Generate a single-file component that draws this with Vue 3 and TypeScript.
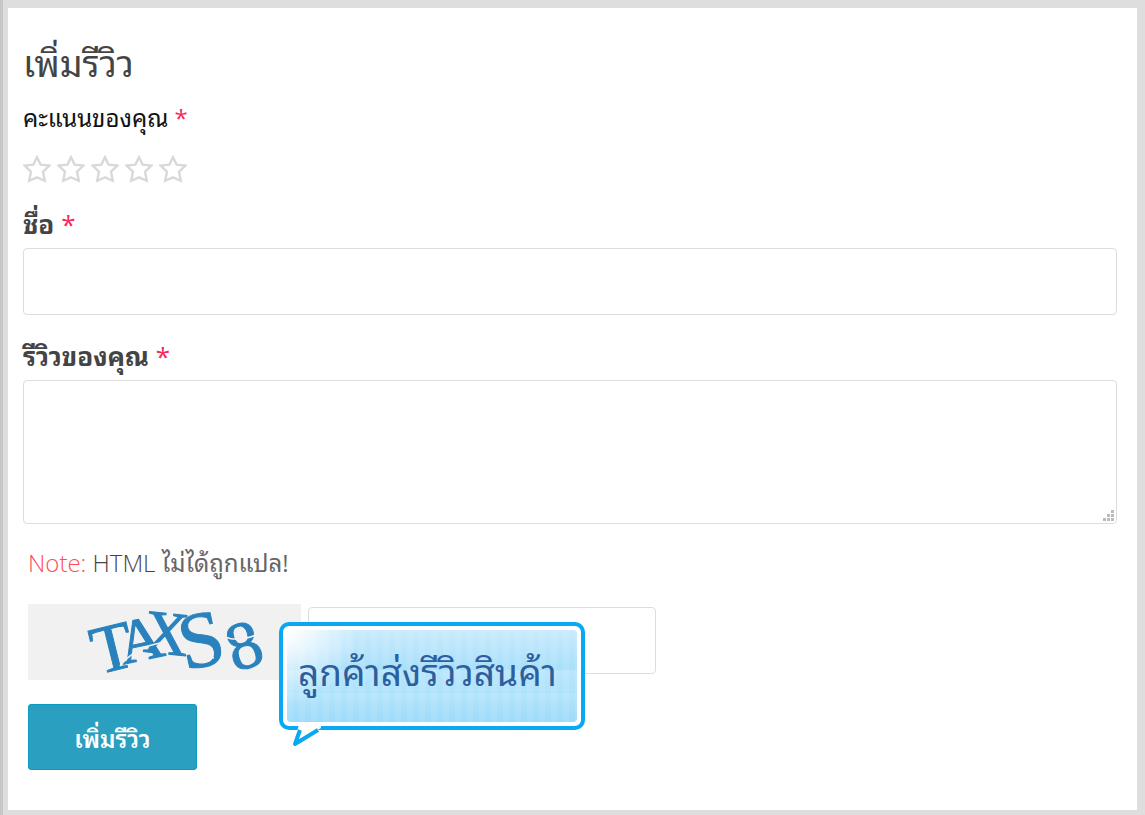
<script setup lang="ts">
import { ref } from 'vue'

const rating = ref(0)
const name = ref('')
const review = ref('')
const code = ref('')
const stars = [1, 2, 3, 4, 5]
</script>

<template>
  <main class="page">
    <form class="card" @submit.prevent>
      <h1 class="title">เพิ่มรีวิว</h1>

      <fieldset class="rating">
        <legend class="label plain">คะแนนของคุณ <span class="req">*</span></legend>
        <div class="stars">
          <label v-for="n in stars" :key="n" class="star" :class="{ on: n <= rating }">
            <input v-model="rating" type="radio" name="rating" :value="n" :aria-label="String(n)" />
            <svg viewBox="0 0 28 28" aria-hidden="true">
              <path d="M14 2.2 L17.6 9.6 L26.4 10.6 L20 16.6 L21.8 25.8 L14 22.4 L6.2 25.8 L8 16.6 L1.6 10.6 L10.4 9.6 Z" />
            </svg>
          </label>
        </div>
      </fieldset>

      <label class="label" for="name">ชื่อ <span class="req">*</span></label>
      <input id="name" v-model="name" class="field" type="text" />

      <label class="label second" for="review">รีวิวของคุณ <span class="req">*</span></label>
      <div class="area">
        <textarea id="review" v-model="review" class="field"></textarea>
        <svg class="grip" viewBox="0 0 12 12" aria-hidden="true">
          <path d="M8 0h3v3h-3z M4 4h3v3h-3z M8 4h3v3h-3z M0 8h3v3h-3z M4 8h3v3h-3z M8 8h3v3h-3z" />
        </svg>
      </div>

      <div class="foot">
        <p class="note"><span class="warn">Note:</span> HTML <span class="thai">ไม่ได้ถูกแปล!</span></p>

        <div class="captcha">
          <svg class="code" viewBox="0 0 273 76" role="img" aria-label="TAXS8">
            <g class="glyphs">
              <text x="69" y="66" font-size="68" transform="rotate(-14 89 66)">T</text>
              <text x="94" y="56" font-size="62" transform="rotate(-12 116 55)">A</text>
              <text x="116" y="50" font-size="62" transform="rotate(6 139 30)">X</text>
              <text x="151" y="63" font-size="80" transform="rotate(-12 170 37)">S</text>
              <text x="199" y="64" font-size="68" transform="rotate(-18 216 42)">8</text>
            </g>
            <path class="cut" d="M92 62 Q106 44 132 39 M156 43 L186 54 M197 33 Q212 39 232 29" />
          </svg>
          <div class="answer">
            <input v-model="code" class="field" type="text" aria-label="TAXS8" />
            <div class="bubble">
              <span>ลูกค้าส่งรีวิวสินค้า</span>
              <svg class="tail" viewBox="0 0 34 26" aria-hidden="true">
                <path class="fill" d="M10 0 L5 20 L32 4 L32 0 Z" />
                <path class="edge" d="M11 6 L6 20 L29 6" />
              </svg>
            </div>
          </div>
        </div>

        <button class="submit" type="submit">เพิ่มรีวิว</button>
      </div>
    </form>
  </main>
</template>

<style>
body {
  background: #dedede;
}
</style>

<style scoped>
.page {
  box-sizing: border-box;
  min-height: 100vh;
  padding: 8px 8px 5px 5px;
  border-left: 3px solid #c6c6c6;
  display: flex;
  font-family: 'Open Sans', 'Noto Sans Thai Looped', 'Loma', 'Waree', 'Noto Sans Thai', 'Noto Sans', sans-serif;
  color: #444;
}
.card {
  flex: 1;
  display: flex;
  flex-direction: column;
  box-sizing: border-box;
  padding: 28px 20px 38px 15px;
  background: #fff;
}
.title {
  margin: 0 0 6px;
  font-size: 36px;
  line-height: 56px;
  font-weight: 400;
}
.rating {
  margin: 0;
  padding: 0;
  border: 0;
}
.label {
  display: block;
  padding: 0;
  font-size: 26px;
  line-height: 40px;
  font-weight: 700;
  margin-bottom: 4px;
}
.plain {
  font-size: 24px;
  font-weight: 400;
  color: #111;
}
.second {
  margin-top: 21px;
}
.req {
  color: #f8285a;
  font-weight: 500;
}
.stars {
  display: flex;
  gap: 6px;
  padding: 13px 0 21px;
}
.star {
  display: block;
  position: relative;
  width: 28px;
  height: 28px;
}
.star input {
  position: absolute;
  inset: 0;
  width: 100%;
  height: 100%;
  margin: 0;
  opacity: 0;
}
.star svg {
  display: block;
}
.star path {
  fill: none;
  stroke: #d9d9d9;
  stroke-width: 2.4;
}
.star.on path {
  fill: #d9d9d9;
}
.field {
  display: block;
  box-sizing: border-box;
  width: 100%;
  height: 67px;
  padding: 8px 16px;
  border: 1px solid #ddd;
  border-radius: 4px;
  background: #fff;
  font: inherit;
  font-size: 24px;
  outline: none;
}
.area {
  position: relative;
}
.area .field {
  height: 144px;
  resize: none;
}
.grip {
  position: absolute;
  right: 2px;
  bottom: 2px;
  width: 12px;
  height: 12px;
  fill: #bbb;
}
.foot {
  padding-left: 5px;
}
.note {
  margin: 18px 0 20px;
  font-size: 24px;
  line-height: 42px;
  font-weight: 300;
  color: #444;
}
.thai {
  font-weight: 400;
  color: #666;
}
.warn {
  color: #ff4d55;
}
.captcha {
  display: flex;
  gap: 7px;
}
.code {
  width: 273px;
  height: 76px;
  overflow: visible;
  background: #f1f1f1;
}
.glyphs {
  fill: #2982bd;
  font-family: 'Liberation Serif', serif;
  stroke: #2982bd;
  stroke-width: 1;
}
.cut {
  fill: none;
  stroke: #f1f1f1;
  stroke-width: 1.5;
}
.answer {
  position: relative;
  width: 348px;
  padding-top: 3px;
}
.bubble {
  position: absolute;
  left: -29px;
  top: 18px;
  box-sizing: border-box;
  width: 306px;
  height: 108px;
  border: 4px solid #09a8f2;
  border-radius: 10px;
  background: #fff;
  padding: 4px;
  color: #2d5f9e;
  font-size: 37px;
  line-height: 84px;
}
.bubble span {
  display: block;
  height: 92px;
  padding-left: 11px;
  border-radius: 4px;
  white-space: nowrap;
  background:
    radial-gradient(circle at 0 0, #fff 0, rgba(255, 255, 255, 0) 72px),
    repeating-linear-gradient(90deg, rgba(255, 255, 255, 0.08) 0 6px, rgba(255, 255, 255, 0) 6px 12px),
    linear-gradient(#c9ebfd, #a8dffa 43%, #b9e6fc 44%, #aee2fb 68%, #b5e5fc 69%, #9ddaf9);
}
.tail {
  position: absolute;
  left: 6px;
  top: 98px;
  width: 34px;
  height: 26px;
}
.fill {
  fill: #fff;
}
.edge {
  fill: none;
  stroke: #09a8f2;
  stroke-width: 4;
  stroke-linejoin: round;
}
.submit {
  display: block;
  margin-top: 24px;
  width: 169px;
  height: 66px;
  padding: 0;
  border: 1px solid #0b9cbd;
  border-radius: 3px;
  background: #2a9fbf;
  color: #fff;
  font: inherit;
  font-size: 24px;
  font-weight: 600;
}
</style>
